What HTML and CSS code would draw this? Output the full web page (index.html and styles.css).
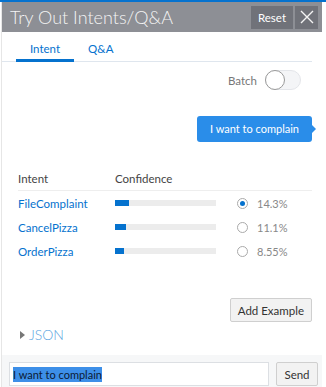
FILE: index.html
```html
<!DOCTYPE html>
<html lang="en">

<head>
    <meta charset="UTF-8">
    <meta name="viewport" content="width=device-width, initial-scale=1.0">
    <title>Try Out Intents/Q&amp;A</title>
    <link rel="stylesheet" href="styles.css">
</head>

<body>
    <div class="top-strip"></div>
    <div class="panel">
        <!-- 标题栏 -->
        <div class="panel-header">
            <div class="panel-title">Try Out Intents/Q&amp;A</div>
            <button class="btn-reset">Reset</button>
            <button class="btn-close" aria-label="Close">
                <svg viewBox="0 0 16 16" width="16" height="16">
                    <path d="M2 2 14 14M14 2 2 14" stroke="#f4f4f4" stroke-width="1.4" fill="none"></path>
                </svg>
            </button>
        </div>

        <!-- 选项卡 -->
        <div class="tabs">
            <a href="#" class="tab active">Intent</a>
            <a href="#" class="tab">Q&amp;A</a>
        </div>

        <div class="content">
            <div class="batch-row">
                <span class="batch-label">Batch</span>
                <span class="switch"><span class="knob"></span></span>
            </div>

            <div class="bubble-row">
                <div class="bubble">I want to complain</div>
            </div>

            <!-- 意图结果表 -->
            <div class="intent-table">
                <div class="table-head">
                    <span class="col-name">Intent</span>
                    <span class="col-conf">Confidence</span>
                </div>
                <div class="table-row">
                    <a href="#" class="col-name">FileComplaint</a>
                    <span class="col-conf"><span class="bar"><span class="bar-fill" style="width: 14%"></span></span></span>
                    <span class="radio checked"></span>
                    <span class="pct">14.3%</span>
                </div>
                <div class="table-row">
                    <a href="#" class="col-name">CancelPizza</a>
                    <span class="col-conf"><span class="bar"><span class="bar-fill" style="width: 11%"></span></span></span>
                    <span class="radio"></span>
                    <span class="pct">11.1%</span>
                </div>
                <div class="table-row">
                    <a href="#" class="col-name">OrderPizza</a>
                    <span class="col-conf"><span class="bar"><span class="bar-fill" style="width: 8.5%"></span></span></span>
                    <span class="radio"></span>
                    <span class="pct">8.55%</span>
                </div>
            </div>

            <div class="actions">
                <button class="btn-grey">Add Example</button>
            </div>

            <div class="json-toggle">
                <span class="caret"></span>
                <a href="#">JSON</a>
            </div>
        </div>

        <!-- 底部输入栏 -->
        <div class="footer">
            <div class="input"><span class="selected">I want to complain</span></div>
            <button class="btn-grey btn-send">Send</button>
        </div>
    </div>
</body>

</html>
```

FILE: styles.css
```css
body {
    margin: 0;
    font-family: 'Lato', 'Open Sans', sans-serif;
    font-size: 12px;
    color: #333;
    background-color: #fff;
}

.top-strip {
    height: 2px;
    background-color: #0572ce;
}

.panel {
    width: 320px;
    margin-left: 2px;
    height: 385px;
    display: flex;
    flex-direction: column;
    box-shadow: -1px 0 0 #e6e6e6;
}

/* 标题栏 */
.panel-header {
    display: flex;
    align-items: center;
    height: 30px;
    padding: 0 4px 0 8px;
    background-color: #8d8f95;
}

.panel-title {
    flex: 1;
    font-size: 18px;
    font-weight: 300;
    color: #f4f4f4;
}

.panel-header button {
    height: 23px;
    border: none;
    background-color: #707279;
    color: #fff;
    padding: 0;
    font-family: inherit;
}

.btn-reset {
    width: 42px;
    font-size: 11.5px;
    margin-right: 2px;
}

.btn-close {
    width: 23px;
    display: flex;
    align-items: center;
    justify-content: center;
}

/* 选项卡 */
.tabs {
    display: flex;
    height: 30px;
    padding-left: 14px;
    border-bottom: 1px solid #dfe6ee;
    box-sizing: border-box;
    margin-right: 10px;
}

.tab {
    display: flex;
    align-items: center;
    justify-content: center;
    text-decoration: none;
    color: #0572ce;
    font-size: 11.5px;
    padding-top: 3px;
}

.tab:first-child {
    width: 58px;
}

.tab + .tab {
    margin-left: 12px;
    padding: 3px 2px 0;
}

.tab.active {
    border-bottom: 3px solid #0572ce;
    box-sizing: border-box;
    padding-top: 6px;
    margin-bottom: -1px;
}

.content {
    flex: 1;
    padding: 0 10px 0 14px;
}

.batch-row {
    display: flex;
    justify-content: flex-end;
    align-items: center;
    gap: 8px;
    margin-top: 7px;
    padding-right: 11px;
    height: 22px;
}

.batch-label {
    color: #777;
    font-size: 11.5px;
}

.switch {
    position: relative;
    width: 36px;
    height: 20px;
    border-radius: 11px;
    background-color: #f4f5f7;
    border: 1px solid #e4e6ea;
    box-sizing: border-box;
}

.knob {
    position: absolute;
    left: -1px;
    top: -1px;
    width: 20px;
    height: 20px;
    border-radius: 50%;
    background-color: #fff;
    border: 1px solid #999;
    box-sizing: border-box;
}

.bubble-row {
    display: flex;
    justify-content: flex-end;
    margin-top: 25px;
}

.bubble {
    position: relative;
    background-color: #2a8de9;
    color: #fff;
    border-radius: 3px;
    padding: 6px 13px 7px 13px;
    font-size: 11px;
}

.bubble::after {
    content: '';
    position: absolute;
    right: -4px;
    top: 9px;
    border-left: 4px solid #2a8de9;
    border-top: 4px solid transparent;
    border-bottom: 4px solid transparent;
}

/* 意图结果表 */
.intent-table {
    margin-top: 27px;
    padding-left: 2px;
}

.table-head {
    display: flex;
    align-items: center;
    height: 18px;
    padding-bottom: 3px;
    border-bottom: 1px solid #eeeeee;
    color: #444;
    font-size: 11.5px;
}

.col-name {
    width: 97px;
    flex-shrink: 0;
}

a.col-name {
    color: #0572ce;
    text-decoration: none;
    font-size: 11.5px;
}

.col-conf {
    width: 122px;
    flex-shrink: 0;
}

.table-row {
    display: flex;
    align-items: center;
    height: 24px;
}

.table-row:first-of-type {
    margin-top: 3px;
}

.bar {
    display: block;
    width: 101px;
    height: 6px;
    background-color: #ececec;
}

.bar-fill {
    display: block;
    height: 100%;
    background-color: #0572ce;
}

.radio {
    width: 11px;
    height: 11px;
    border-radius: 50%;
    border: 1px solid #aaa;
    box-sizing: border-box;
    position: relative;
}

.radio.checked::after {
    content: '';
    position: absolute;
    left: 2px;
    top: 2px;
    width: 5px;
    height: 5px;
    border-radius: 50%;
    background-color: #0572ce;
}

.pct {
    margin-left: 9px;
    color: #888;
    font-size: 11px;
}

.actions {
    display: flex;
    justify-content: flex-end;
    margin-top: 35px;
}

.btn-grey {
    height: 24px;
    padding: 0 7px;
    background-color: #f2f2f2;
    border: 1px solid #cfcfcf;
    border-radius: 2px;
    color: #333;
    font-family: inherit;
    font-size: 11.5px;
}

.json-toggle {
    display: flex;
    align-items: center;
    gap: 4px;
    margin-top: 4px;
    padding-left: 4px;
}

.caret {
    border-left: 5px solid #777;
    border-top: 4px solid transparent;
    border-bottom: 4px solid transparent;
}

.json-toggle a {
    color: #5aa3e0;
    text-decoration: none;
    font-size: 14px;
    font-weight: 300;
}

/* 底部输入栏 */
.footer {
    display: flex;
    align-items: flex-start;
    gap: 7px;
    height: 32px;
    padding: 7px 4px 0 7px;
    box-sizing: border-box;
    background-color: #f6f7f8;
}

.input {
    flex: 1;
    height: 24px;
    border: 1px solid #dcdfe3;
    background-color: #fff;
    box-sizing: border-box;
    display: flex;
    align-items: center;
    padding-left: 3px;
}

.selected {
    background-color: #3d8fe8;
    color: #0c1a33;
    font-size: 11px;
    line-height: 15px;
}

.btn-send {
    width: 42px;
    padding: 0;
}
```
